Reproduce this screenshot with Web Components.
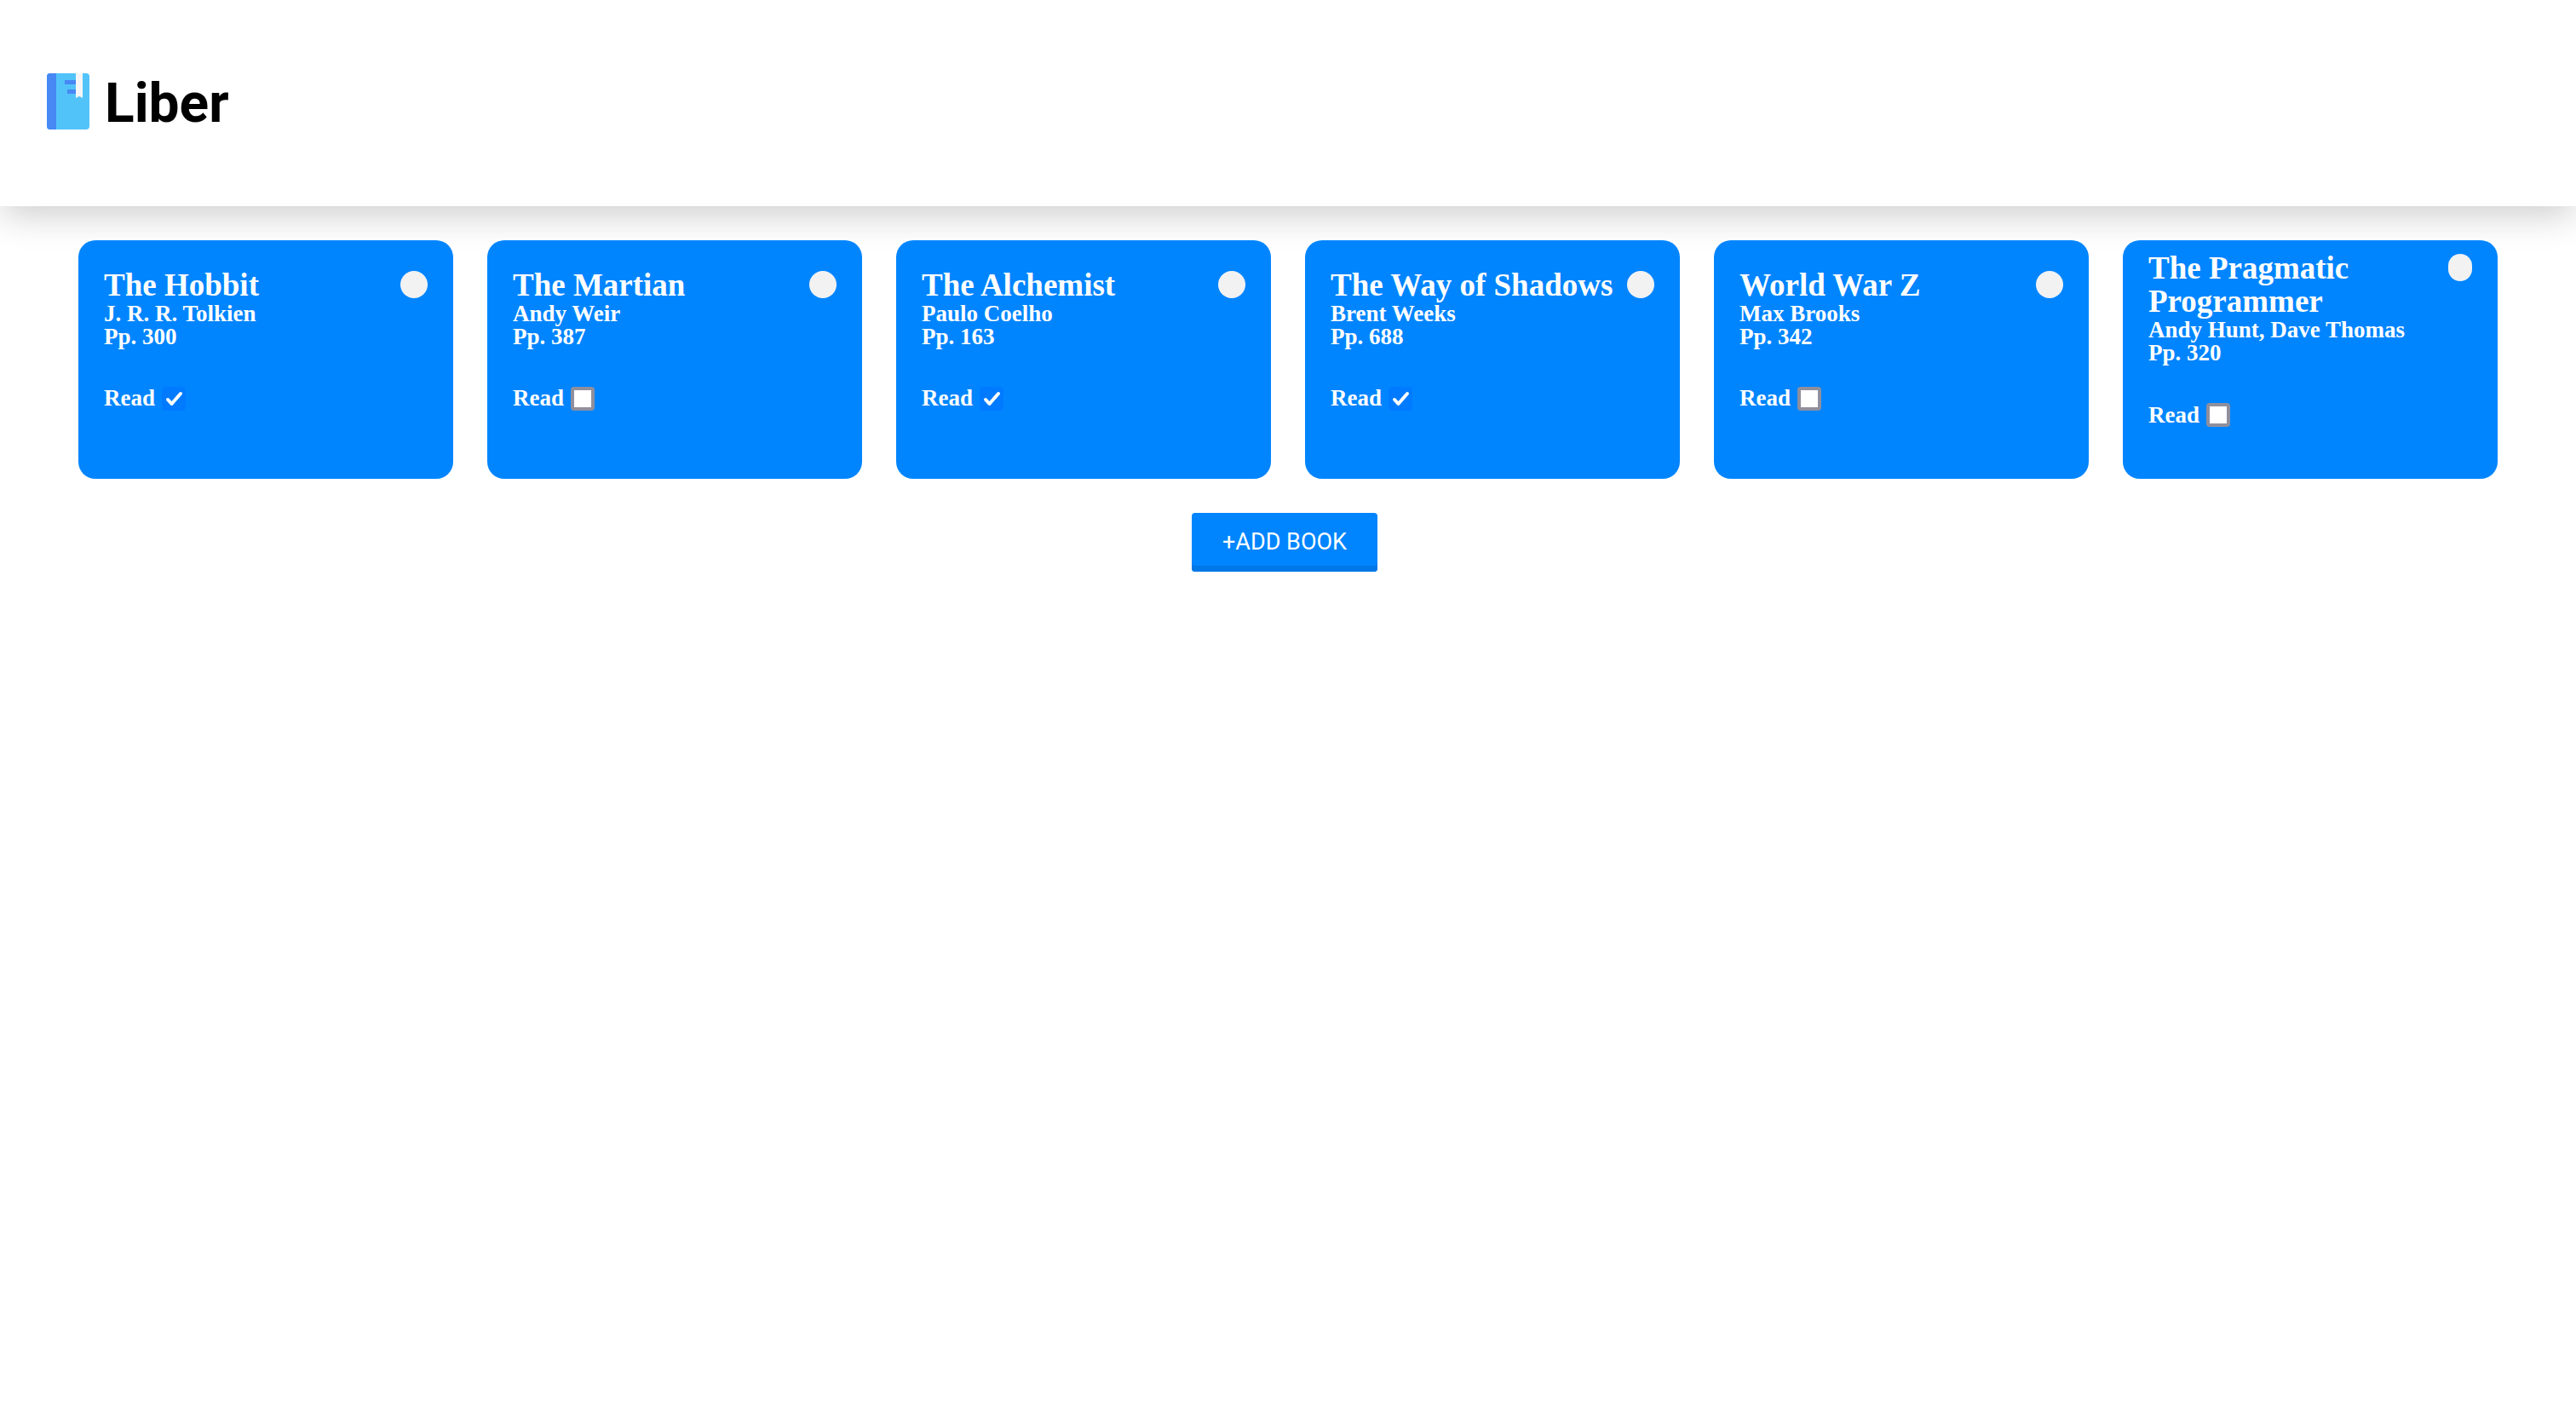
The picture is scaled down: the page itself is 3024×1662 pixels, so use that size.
<!DOCTYPE html>
<html lang="en">
<head>
<meta charset="utf-8">
<title>Liber</title>
<meta name="viewport" content="width=device-width, initial-scale=1">
<style>
  body { margin: 0; background: #fff; font-family: "Liberation Serif", serif; }
</style>
</head>
<body>
<liber-app></liber-app>

<script>
class LiberHeader extends HTMLElement {
  constructor() {
    super();
    this.attachShadow({ mode: "open" }).innerHTML = `
      <style>
        :host { display: block; }
        header {
          display: flex; align-items: center; gap: 18px;
          box-sizing: border-box; min-height: 242px; padding: 0 55px 4px;
          background: #fff;
          box-shadow: 0 12px 40px -2px rgba(0, 0, 0, .2);
        }
        svg { width: 50px; height: 66px; flex: none; }
        h1 { margin: 0; padding-top: 6px; font: 700 64px/76px Roboto, sans-serif; color: #000; }
      </style>
      <header>
        <svg viewBox="0 0 50 66" aria-hidden="true">
          <rect width="50" height="66" rx="4" fill="#52c3f9"/>
          <path d="M4 0h7v66H4a4 4 0 0 1-4-4V4a4 4 0 0 1 4-4z" fill="#4788f4"/>
          <path d="M21 8h14v5H21zM24 19h11v5H24z" fill="#4788f4"/>
          <path d="M34 0h8v29l-4-2-4 2z" fill="#f5f5f5"/>
        </svg>
        <h1><slot></slot></h1>
      </header>`;
  }
}

class BookCard extends HTMLElement {
  constructor() {
    super();
    this.attachShadow({ mode: "open" }).innerHTML = `
      <style>
        :host { display: block; }
        article {
          display: flex; flex-direction: column; justify-content: center;
          box-sizing: border-box; height: 280px; padding: 0 30px;
          border-radius: 20px; background: #0085ff; color: #fff;
          font-size: 27px; line-height: 27px; font-weight: 700;
        }
        .top { display: flex; align-items: flex-start; justify-content: space-between; margin-bottom: 1px; }
        h2 { margin: 0; font-size: 37px; line-height: 39px; }
        .remove {
          width: 32px; min-width: 28px; height: 32px; margin: 3px 0 0; padding: 0;
          border: 0; border-radius: 16px; background: #f2f2f2; cursor: pointer;
        }
        p { margin: 0; }
        label { display: flex; align-items: center; gap: 8px; margin: 45px 0 48px; }
        .box { display: grid; }
        .box > * { grid-area: 1 / 1; }
        input {
          appearance: none; box-sizing: border-box; width: 28px; height: 28px; margin: 0;
          border: 4px solid #8f8f9d; border-radius: 4px; background: #fff;
        }
        input:checked { border-color: #007aff; background: #007aff; }
        svg { width: 28px; height: 28px; pointer-events: none; visibility: hidden; }
        input:checked + svg { visibility: visible; }
      </style>
      <article>
        <div class="top">
          <h2><slot name="title"></slot></h2>
          <button class="remove" type="button" aria-label="Remove"></button>
        </div>
        <p><slot name="author"></slot></p>
        <p><slot name="pages"></slot></p>
        <label>Read
          <span class="box">
            <input type="checkbox">
            <svg viewBox="0 0 28 28" aria-hidden="true">
              <path d="M7 15l4.500 5L22 8" fill="none" stroke="#fff" stroke-width="4" stroke-linecap="round" stroke-linejoin="round"/>
            </svg>
          </span>
        </label>
      </article>`;
  }
  connectedCallback() {
    this.shadowRoot.querySelector("input").checked = this.hasAttribute("read");
  }
}

class AddButton extends HTMLElement {
  constructor() {
    super();
    this.attachShadow({ mode: "open" }).innerHTML = `
      <style>
        :host { display: block; }
        button {
          display: block; height: 69px; padding: 0 36px 1px; border: 0;
          border-radius: 4px; background: #0085ff; color: #fff;
          box-shadow: inset 0 -7px #0077e6;
          font: 400 27px/32px Roboto, sans-serif; cursor: pointer;
        }
      </style>
      <button type="button"><slot></slot></button>`;
  }
}

class LiberApp extends HTMLElement {
  constructor() {
    super();
    this.attachShadow({ mode: "open" }).innerHTML = `
      <style>
        :host { display: block; }
        main { position: relative; padding: 40px 92px; }
        .shelf { display: grid; grid-template-columns: repeat(auto-fill, minmax(440px, 1fr)); gap: 40px; }
        .actions { display: flex; justify-content: center; padding: 40px 8px 0 0; }
      </style>
      <liber-header>Liber</liber-header>
      <main>
        <section class="shelf"></section>
        <div class="actions"><add-button>+ADD BOOK</add-button></div>
      </main>`;
    const books = [
      ["The Hobbit", "J. R. R. Tolkien", 300, true],
      ["The Martian", "Andy Weir", 387, false],
      ["The Alchemist", "Paulo Coelho", 163, true],
      ["The Way of Shadows", "Brent Weeks", 688, true],
      ["World War Z", "Max Brooks", 342, false],
      ["The Pragmatic Programmer", "Andy Hunt, Dave Thomas", 320, false]
    ];
    this.shadowRoot.querySelector(".shelf").innerHTML = books.map(([title, author, pages, read]) => `
      <book-card${read ? " read" : ""}>
        <span slot="title">${title}</span>
        <span slot="author">${author}</span>
        <span slot="pages">Pp. ${pages}</span>
      </book-card>`).join("");
  }
}

customElements.define("liber-header", LiberHeader);
customElements.define("book-card", BookCard);
customElements.define("add-button", AddButton);
customElements.define("liber-app", LiberApp);
</script>
</body>
</html>
